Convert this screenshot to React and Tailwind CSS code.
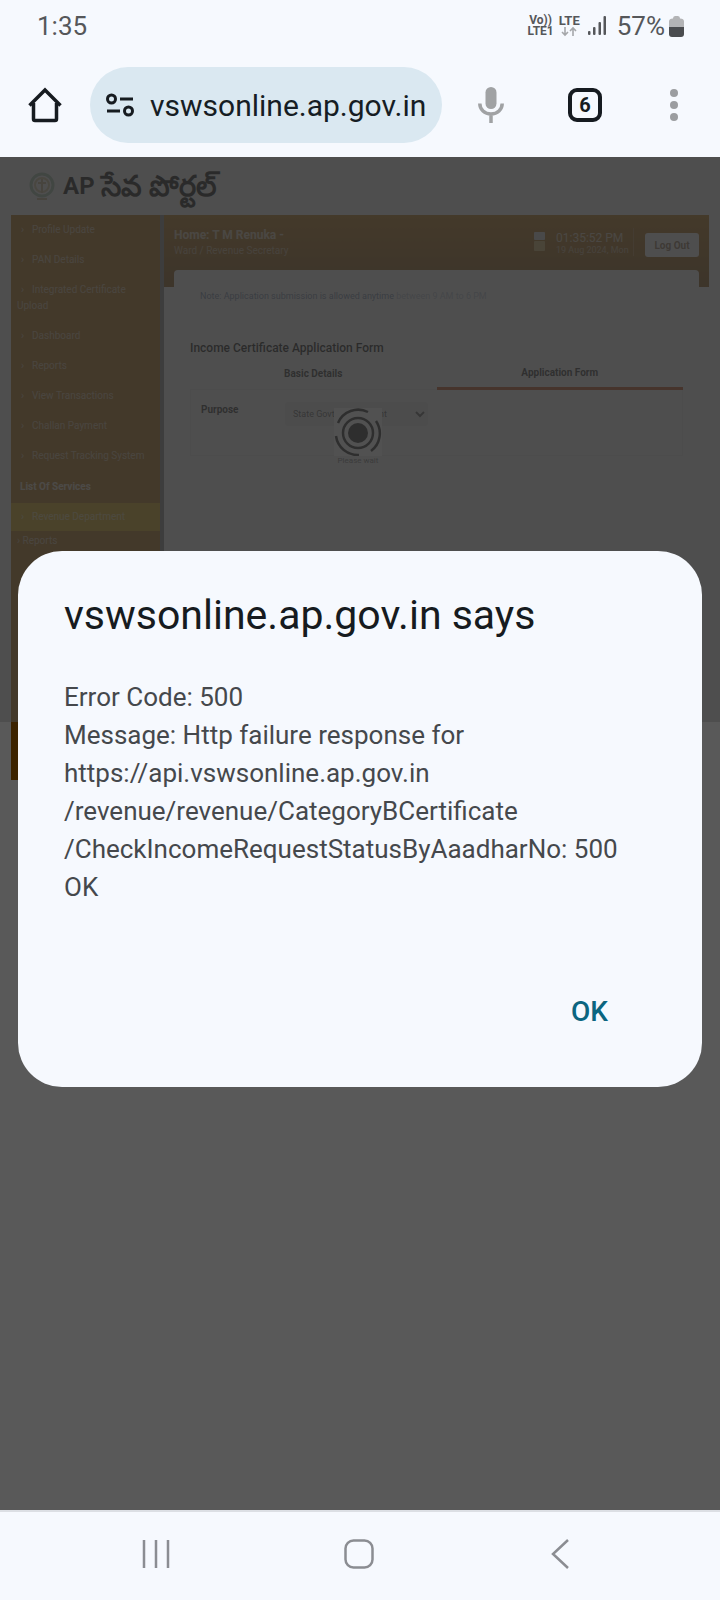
const menuItems = [
  'Profile Update',
  'PAN Details',
  'Integrated Certificate Upload',
  'Dashboard',
  'Reports',
  'View Transactions',
  'Challan Payment',
  'Request Tracking System',
];

const errorLines = [
  'Error Code: 500',
  'Message: Http failure response for',
  'https://api.vswsonline.ap.gov.in',
  '/revenue/revenue/CategoryBCertificate',
  '/CheckIncomeRequestStatusByAaadharNo: 500',
  'OK',
];

function StatusBar() {
  return (
    <div className="flex h-[52px] items-center pl-[37px] pr-9 text-[#55575a]">
      <span className="flex-1 text-[26px]">1:35</span>
      <div className="flex flex-col items-center text-[12px] leading-[11px] font-bold">
        <span>Vo))</span>
        <span>LTE1</span>
      </div>
      <div className="ml-[5px] flex flex-col items-center text-[13px] leading-[11px] font-bold">
        <span>LTE</span>
        <svg width="16" height="11" viewBox="0 0 16 11" fill="none" stroke="#a5a7aa" strokeWidth="1.6">
          <path d="M4 1v8M1 6l3 3 3-3M12 10V2M9 5l3-3 3 3" />
        </svg>
      </div>
      <svg className="ml-2" width="19" height="20" viewBox="0 0 19 20" fill="#55575a">
        <rect x="0" y="15" width="2.500" height="4" rx="1" />
        <rect x="5" y="11" width="2.500" height="8" rx="1" />
        <rect x="10.500" y="6" width="2.500" height="13" rx="1" />
        <rect x="15.500" y="0" width="2.500" height="19" rx="1" />
      </svg>
      <span className="ml-[10px] text-[26px]">57%</span>
      <svg className="ml-1" width="15" height="21" viewBox="0 0 15 21">
        <path d="M4 2.500Q4 0 6 0h3q2 0 2 2.500 4 0 4 3V11H0V5.500q0-3 4-3z" fill="#b3b4b6" />
        <path d="M0 11h15v7q0 3-3 3H3q-3 0-3-3z" fill="#4a4c4f" />
      </svg>
    </div>
  );
}

function Toolbar() {
  return (
    <div className="flex h-[105px] items-center pl-7 pr-[42px]">
      <button aria-label="Home">
        <svg width="34" height="36" viewBox="0 0 34 36" fill="none" stroke="#161b20" strokeWidth="3.500" strokeLinejoin="round">
          <path d="M5.500 16v16q0 1.500 1.500 1.500h20q1.500 0 1.500-1.500V16" />
          <path d="M1.500 18.500L17 3l15.500 15.500" strokeLinejoin="miter" />
        </svg>
      </button>
      <div className="ml-7 flex h-[76px] flex-1 items-center rounded-full bg-[#dae8f1] pl-4 pr-3">
        <svg width="28" height="26" viewBox="0 0 28 26" fill="none" stroke="#161b20" strokeWidth="3">
          <circle cx="5.500" cy="7" r="4" />
          <path d="M14 7h13M1 19h13" />
          <circle cx="22.500" cy="19" r="4" />
        </svg>
        <input
          aria-label="Address"
          readOnly
          value="vswsonline.ap.gov.in"
          className="ml-4 w-0 flex-1 bg-transparent pt-[2px] text-[30px] text-[#161d24] outline-none"
        />
      </div>
      <button aria-label="Voice search" className="ml-9">
        <svg width="26" height="37" viewBox="0 0 26 37" fill="none" stroke="#a0a2a4" strokeWidth="3.500">
          <rect x="7.500" y="1" width="11" height="22" rx="5.500" fill="#a0a2a4" stroke="none" />
          <path d="M1.800 17.500c0 6 4.800 10.500 11.200 10.500s11.200-4.500 11.200-10.500M13 28v9" />
        </svg>
      </button>
      <button
        aria-label="Tabs"
        className="ml-16 flex h-[34px] w-[34px] items-center justify-center rounded-[9px] border-[4px] border-[#161b20] text-[20px] font-bold text-[#161b20]"
      >
        6
      </button>
      <button aria-label="Menu" className="ml-[68px]">
        <svg width="8" height="32" viewBox="0 0 8 32" fill="#9b9da0">
          <circle cx="4" cy="4" r="4" />
          <circle cx="4" cy="16" r="4" />
          <circle cx="4" cy="28" r="4" />
        </svg>
      </button>
    </div>
  );
}

function Sidebar() {
  return (
    <nav className="h-[565px] w-[149px] shrink-0 bg-[#ad6600] text-[10px] leading-4 text-white/60">
      {menuItems.map((item) => (
        <a key={item} href="#" className="block py-[7px] pl-[6px] pr-2">
          <span className="inline-block w-[15px] pl-1">›</span>
          {item}
        </a>
      ))}
      <h2 className="h-8 pl-[9px] leading-8 font-bold text-white/80">List Of Services</h2>
      <a href="#" className="block h-7 bg-[#e0a800] pl-[6px] leading-7">
        <span className="inline-block w-[15px] pl-1">›</span>
        Revenue Department
      </a>
      <a href="#" className="block pt-[2px] pl-[6px]">› Reports</a>
    </nav>
  );
}

function Banner() {
  return (
    <header className="flex h-[72px] items-start bg-linear-to-b from-[#b56c00] to-[#824800] px-[10px] pt-[13px] text-white">
      <div className="flex-1">
        <p className="text-[12px] leading-[15px] font-bold text-white/70">Home: T M Renuka -</p>
        <p className="text-[10px] leading-4 text-white/50">Ward / Revenue Secretary</p>
      </div>
      <svg className="mt-1" width="11" height="20" viewBox="0 0 11 20">
        <rect width="11" height="8" rx="1" fill="#ddd" />
        <rect y="9" width="11" height="10" rx="1" fill="#d6b464" />
      </svg>
      <div className="ml-[11px] w-[78px] border-r border-[#b5803a]">
        <p className="pt-1 text-[12px] leading-3 text-white/70">01:35:52 PM</p>
        <p className="text-[9px] leading-3 text-white/50">19 Aug 2024, Mon</p>
      </div>
      <button className="mt-[5px] ml-[11px] h-6 w-[54px] rounded-[3px] bg-white text-[10px] font-bold text-[#8a6a4a]">Log Out</button>
    </header>
  );
}

function FormCard() {
  return (
    <div className="mx-[10px] -mt-[17px] rounded-t-[4px] bg-white px-4">
      <p className="ml-[10px] pt-[18px] text-[9px] leading-4 text-[#6f86a8]">
        Note: Application submission is allowed anytime <span className="text-[#b9c4d6]">between 9 AM to 6 PM</span>
      </p>
      <h1 className="mt-[34px] text-[12px] leading-5 font-medium text-black">Income Certificate Application Form</h1>
      <div className="flex text-center text-[10px] font-bold text-[#222]">
        <button className="h-8 flex-1 border-b border-[#eee]">Basic Details</button>
        <button className="h-8 flex-1 border-b-[3px] border-[#c2410c]">Application Form</button>
      </div>
      <div className="flex h-[66px] items-start border-x border-b border-[#eee] pt-3 pl-[10px]">
        <label htmlFor="purpose" className="w-[84px] text-[10px] font-bold text-[#222]">Purpose</label>
        <select id="purpose" className="h-6 w-[143px] rounded-[2px] bg-[#f2f2f2] pl-1 text-[9px] text-[#555]">
          <option>State Govt Employment</option>
        </select>
      </div>
    </div>
  );
}

function Loader() {
  return (
    <div className="absolute inset-x-0 top-0 h-[565px] bg-[#ccc]/60 pt-[251px] pr-1">
      <div className="mx-auto w-12 text-center text-[8px] leading-[10px] text-[#aaa]">
        <svg className="bg-[#e8e8e8]" width="48" height="48" viewBox="0 0 48 48" fill="none" stroke="#858585" strokeWidth="2.500">
          <circle cx="24" cy="25" r="10" fill="#858585" stroke="none" />
          <circle cx="24" cy="25" r="15" />
          <path d="M4 15A22 22 0 0 1 34 4M42 13A22 22 0 0 1 37 43M25 47A22 22 0 0 1 2 28" />
        </svg>
        Please wait
      </div>
    </div>
  );
}

function Portal() {
  return (
    <div className="bg-white">
      <div className="flex h-[58px] items-center pl-[29px]">
        <svg width="26" height="30" viewBox="0 0 26 30" fill="none">
          <circle cx="13" cy="14" r="11" stroke="#a3c2ab" strokeWidth="3" />
          <circle cx="13" cy="14" r="7" stroke="#dcc79c" strokeWidth="2" />
          <path d="M13 8v14M9 12h8M8 28h10" stroke="#cdb48c" strokeWidth="2" />
        </svg>
        <h1 className="ml-2 flex items-center gap-[6px] text-[24px] leading-[58px] font-bold text-black">
          <span>AP</span>
          <span className="text-[29px]">సేవ పోర్టల్</span>
        </h1>
      </div>
      <div className="flex px-[11px]">
        <Sidebar />
        <div className="min-w-0 flex-1 border-l-[4px] border-[#888]">
          <Banner />
          <FormCard />
        </div>
      </div>
      <Loader />
    </div>
  );
}

function AlertDialog() {
  return (
    <div className="absolute inset-0 flex items-center justify-center bg-black/65 px-[18px] pb-[30px]">
      <div
        role="alertdialog"
        aria-labelledby="alert-title"
        className="flex w-full flex-col rounded-[44px] bg-[#f6f9fe] px-[46px] pt-10 pb-[50px]"
      >
        <h2 id="alert-title" className="text-[41px] leading-[48px] text-[#161b20]">vswsonline.ap.gov.in says</h2>
        <div className="mt-[39px] text-[26px] leading-[38px] text-[#45484c]">
          {errorLines.map((line) => (
            <p key={line}>{line}</p>
          ))}
        </div>
        <button className="mt-[81px] mr-8 self-end px-4 text-[28px] leading-[50px] font-medium text-[#0b6580]">OK</button>
      </div>
    </div>
  );
}

function NavBar() {
  return (
    <div className="flex h-[90px] items-center justify-between border-t-2 border-[#dcdfe4] pr-[145px] pb-[5px] pl-[142px] text-[#8b8d92]">
      <button aria-label="Recent apps">
        <svg width="28" height="30" viewBox="0 0 28 30" stroke="currentColor" strokeWidth="2.500">
          <path d="M2 1v28M14 1v28M26 1v28" />
        </svg>
      </button>
      <button aria-label="Home screen">
        <svg width="30" height="30" viewBox="0 0 30 30" fill="none" stroke="currentColor" strokeWidth="2.500">
          <rect x="1.500" y="1.500" width="27" height="27" rx="8" />
        </svg>
      </button>
      <button aria-label="Back">
        <svg width="28" height="30" viewBox="0 0 28 30" fill="none" stroke="currentColor" strokeWidth="2.500">
          <path d="M21 1L6 15 21 29" />
        </svg>
      </button>
    </div>
  );
}

export default function App() {
  return (
    <div className="flex min-h-screen flex-col bg-[#f6f9fe] font-['Roboto',sans-serif]">
      <StatusBar />
      <Toolbar />
      <main className="relative flex-1 bg-white">
        <Portal />
        <AlertDialog />
      </main>
      <NavBar />
    </div>
  );
}
